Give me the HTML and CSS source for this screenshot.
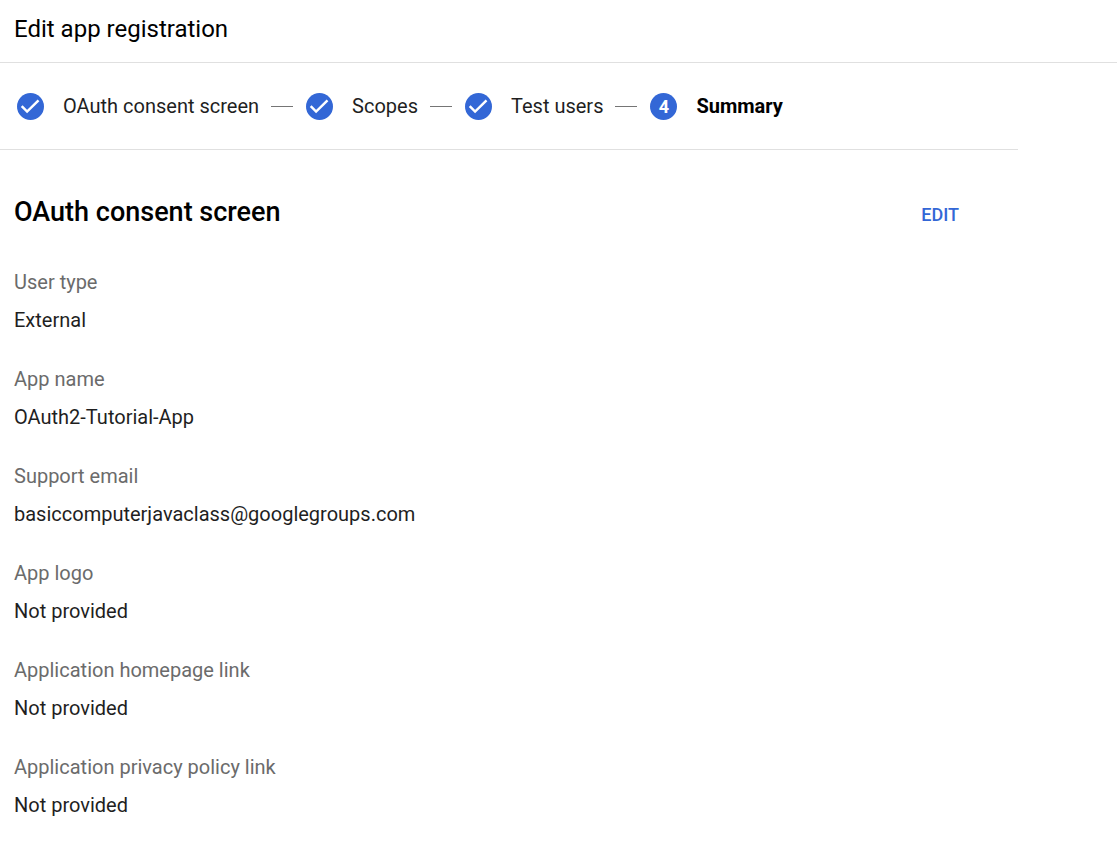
FILE: index.html
```html
<!DOCTYPE html>
<html lang="en">
<head>
<meta charset="utf-8">
<title>Edit app registration</title>
<link rel="stylesheet" href="styles.css">
</head>
<body>
<header class="page-header"><h1>Edit app registration</h1></header>
<main class="content">
<ol class="stepper">
<li class="step"><svg class="badge" viewBox="0 0 27 27" aria-hidden="true"><circle cx="13.5" cy="13.5" r="13.5"/><path d="M4.7 13.2l5.4 5.4L21.5 7.4"/></svg><span>OAuth consent screen</span></li>
<li class="step"><svg class="badge" viewBox="0 0 27 27" aria-hidden="true"><circle cx="13.5" cy="13.5" r="13.5"/><path d="M4.7 13.2l5.4 5.4L21.5 7.4"/></svg><span>Scopes</span></li>
<li class="step"><svg class="badge" viewBox="0 0 27 27" aria-hidden="true"><circle cx="13.5" cy="13.5" r="13.5"/><path d="M4.7 13.2l5.4 5.4L21.5 7.4"/></svg><span>Test users</span></li>
<li class="step current" aria-current="step"><span class="badge number">4</span><span>Summary</span></li>
</ol>
<section class="summary">
<div class="section-head"><h2>OAuth consent screen</h2><button type="button" class="edit">EDIT</button></div>
<dl class="fields">
<div class="field"><dt>User type</dt><dd>External</dd></div>
<div class="field"><dt>App name</dt><dd>OAuth2-Tutorial-App</dd></div>
<div class="field"><dt>Support email</dt><dd>basiccomputerjavaclass@googlegroups.com</dd></div>
<div class="field"><dt>App logo</dt><dd>Not provided</dd></div>
<div class="field"><dt>Application homepage link</dt><dd>Not provided</dd></div>
<div class="field"><dt>Application privacy policy link</dt><dd>Not provided</dd></div>
</dl>
</section>
</main>
</body>
</html>
```
FILE: styles.css
```css
* { box-sizing: border-box; }
body { margin: 0; background: #fff; color: #1f1f1f; font-family: Roboto, sans-serif; font-size: 20px; line-height: 24px; }
h1, h2, ol, dl, dd { margin: 0; padding: 0; }
.page-header { padding: 13px 14px 17px; border-bottom: 1px solid #e0e0e0; }
h1 { font-size: 24px; line-height: 32px; font-weight: 400; color: #000; }
.content { max-width: 1018px; }
.stepper { display: flex; align-items: center; list-style: none; padding: 30px 17px 29px; border-bottom: 1px solid #e0e0e0; }
.step { display: flex; align-items: center; white-space: nowrap; line-height: 23px; }
.step:not(:last-child)::after { content: ""; width: 22px; height: 1px; margin: 0 13px 0 12px; background: #757575; }
.badge { width: 27px; height: 27px; margin-right: 19px; flex: none; }
.badge circle { fill: #3367d6; }
.badge path { fill: none; stroke: #fff; stroke-width: 2.5; }
.number { display: flex; align-items: center; justify-content: center; border-radius: 50%; background: #3367d6; color: #fff; font-size: 18px; font-weight: 700; }
.current { font-weight: 700; color: #000; }
.summary { padding: 44px 59px 24px 14px; }
.section-head { display: flex; align-items: center; justify-content: space-between; }
h2 { font-size: 27px; line-height: 36px; font-weight: 500; color: #000; }
.edit { padding: 5px 0 0; border: 0; background: none; color: #3367d6; font: 500 18px/24px Roboto, sans-serif; cursor: pointer; }
.fields { display: grid; gap: 35px; margin-top: 40px; }
.field { display: grid; gap: 14px; }
dt { color: #6b6b6b; }
```
